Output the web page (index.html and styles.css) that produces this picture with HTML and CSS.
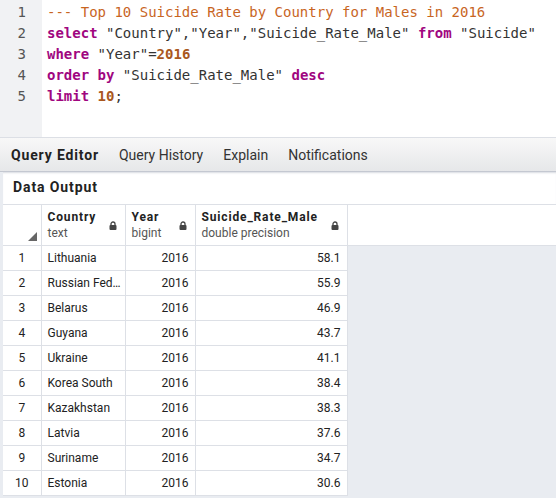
FILE: index.html
```html
<!DOCTYPE html>
<html>
<head>
<meta charset="utf-8">
<link rel="stylesheet" href="styles.css">
</head>
<body>
<div class="editor">
  <div class="gutter">
    <div>1</div><div>2</div><div>3</div><div>4</div><div>5</div>
  </div>
  <div class="code">
    <div class="line"><span class="cm">--- Top 10 Suicide Rate by Country for Males in 2016</span></div>
    <div class="line"><span class="kw">select</span> "Country","Year","Suicide_Rate_Male" <span class="kw">from</span> "Suicide"</div>
    <div class="line"><span class="kw">where</span> "Year"=<span class="num">2016</span></div>
    <div class="line"><span class="kw">order by</span> "Suicide_Rate_Male" <span class="kw">desc</span></div>
    <div class="line"><span class="kw">limit</span> <span class="num">10</span>;</div>
  </div>
</div>
<div class="tabs">
  <div class="tab active">Query Editor</div>
  <div class="tab">Query History</div>
  <div class="tab">Explain</div>
  <div class="tab">Notifications</div>
</div>
<div class="output">
  <div class="output-title">Data Output</div>
  <table class="grid">
    <colgroup>
      <col class="c0"><col class="c1"><col class="c2"><col class="c3"><col>
    </colgroup>
    <thead>
      <tr>
        <th class="corner"><span class="tri"></span></th>
        <th><div class="hd"><div><div class="hname">Country</div><div class="htype">text</div></div><svg class="lock" viewBox="0 0 8 9" width="8" height="9"><path d="M2 4.5V3a2 2 0 0 1 4 0v1.5" fill="none" stroke="#444" stroke-width="1.3"/><rect x="0.5" y="4" width="7" height="5" rx="1" fill="#444"/></svg></div></th>
        <th><div class="hd"><div><div class="hname">Year</div><div class="htype">bigint</div></div><svg class="lock" viewBox="0 0 8 9" width="8" height="9"><path d="M2 4.5V3a2 2 0 0 1 4 0v1.5" fill="none" stroke="#444" stroke-width="1.3"/><rect x="0.5" y="4" width="7" height="5" rx="1" fill="#444"/></svg></div></th>
        <th><div class="hd"><div><div class="hname">Suicide_Rate_Male</div><div class="htype">double precision</div></div><svg class="lock" viewBox="0 0 8 9" width="8" height="9"><path d="M2 4.5V3a2 2 0 0 1 4 0v1.5" fill="none" stroke="#444" stroke-width="1.3"/><rect x="0.5" y="4" width="7" height="5" rx="1" fill="#444"/></svg></div></th>
        <th class="filler"></th>
      </tr>
    </thead>
    <tbody>
      <tr><td class="rn">1</td><td class="txt">Lithuania</td><td class="n">2016</td><td class="n">58.1</td><td class="empty"></td></tr>
      <tr><td class="rn">2</td><td class="txt">Russian Federation</td><td class="n">2016</td><td class="n">55.9</td><td class="empty"></td></tr>
      <tr><td class="rn">3</td><td class="txt">Belarus</td><td class="n">2016</td><td class="n">46.9</td><td class="empty"></td></tr>
      <tr><td class="rn">4</td><td class="txt">Guyana</td><td class="n">2016</td><td class="n">43.7</td><td class="empty"></td></tr>
      <tr><td class="rn">5</td><td class="txt">Ukraine</td><td class="n">2016</td><td class="n">41.1</td><td class="empty"></td></tr>
      <tr><td class="rn">6</td><td class="txt">Korea South</td><td class="n">2016</td><td class="n">38.4</td><td class="empty"></td></tr>
      <tr><td class="rn">7</td><td class="txt">Kazakhstan</td><td class="n">2016</td><td class="n">38.3</td><td class="empty"></td></tr>
      <tr><td class="rn">8</td><td class="txt">Latvia</td><td class="n">2016</td><td class="n">37.6</td><td class="empty"></td></tr>
      <tr><td class="rn">9</td><td class="txt">Suriname</td><td class="n">2016</td><td class="n">34.7</td><td class="empty"></td></tr>
      <tr><td class="rn">10</td><td class="txt">Estonia</td><td class="n">2016</td><td class="n">30.6</td><td class="empty"></td></tr>
    </tbody>
  </table>
</div>
</body>
</html>
```
FILE: styles.css
```css
html, body {
  margin: 0;
  padding: 0;
}
body {
  width: 556px;
  height: 498px;
  overflow: hidden;
  background: #e9ecf1;
  font-family: Roboto, "Liberation Sans", sans-serif;
  color: #222;
}
.editor {
  display: flex;
  height: 137px;
  background: #fff;
  border-bottom: 1px solid #dcdfe5;
  overflow: hidden;
}
.gutter {
  width: 42px;
  flex: none;
  box-sizing: border-box;
  background: #f1f2f4;
  padding: 2px 16px 0 0;
  text-align: right;
  font-family: "DejaVu Sans Mono", monospace;
  font-size: 14px;
  line-height: 21px;
  color: #555;
}
.code {
  padding: 2px 0 0 5px;
  font-family: "DejaVu Sans Mono", monospace;
  font-size: 14px;
  line-height: 21px;
  color: #333;
}
.line {
  white-space: pre;
}
.cm { color: #c8651f; }
.kw { color: #a0067f; font-weight: bold; }
.num { color: #a9581e; font-weight: bold; }
.tabs {
  display: flex;
  height: 33px;
  align-items: center;
  padding-left: 1px;
  background: linear-gradient(#f8f8f8, #e6e7e9);
  border-bottom: 1px solid #c4c8d1;
  font-size: 14px;
}
.tab {
  padding: 0 10px;
  color: #333;
}
.tab.active {
  font-weight: bold;
  letter-spacing: 0.85px;
  color: #222;
}
.output {
  padding-left: 3px;
  background: #e9ecf1;
  height: 326px;
}
.output-title {
  background: #fff;
  height: 32px;
  line-height: 31px;
  padding-left: 10px;
  font-size: 14px;
  font-weight: bold;
  letter-spacing: 0.9px;
  color: #222;
  box-shadow: inset 0 2px 2px -1px #d8dbe1;
}
.grid {
  border-collapse: collapse;
  table-layout: fixed;
  width: 553px;
  font-size: 12px;
}
.c0 { width: 38px; }
.c1 { width: 84px; }
.c2 { width: 70px; }
.c3 { width: 152px; }
.grid th {
  background: #fff;
  height: 40px;
  padding: 0 6px;
  border: 1px solid #dde0e6;
  text-align: left;
  vertical-align: middle;
  font-weight: normal;
  position: relative;
}
.grid th:first-child { border-left: none; }
.grid th.filler { border-right: none; }
.hd {
  display: flex;
  align-items: center;
  justify-content: space-between;
}
.hname {
  font-weight: bold;
  letter-spacing: 0.85px;
  line-height: 16px;
  color: #222;
}
.htype {
  line-height: 16px;
  color: #555;
}
.lock {
  flex: none;
  margin-right: 2px;
}
.tri {
  position: absolute;
  right: 4px;
  bottom: 4px;
  width: 0;
  height: 0;
  border-left: 9px solid transparent;
  border-bottom: 9px solid #666;
}
.grid td {
  height: 24px;
  padding: 0 6px;
  background: #fff;
  border: 1px solid #dde0e6;
  color: #222;
  white-space: nowrap;
  overflow: hidden;
  text-overflow: ellipsis;
}
.grid td:first-child { border-left: none; }
.grid td.rn { text-align: center; padding: 0; }
.grid td.txt { padding-right: 3px; }
.grid td.n { text-align: right; }
.grid td.empty {
  background: transparent;
  border: none;
}
```
